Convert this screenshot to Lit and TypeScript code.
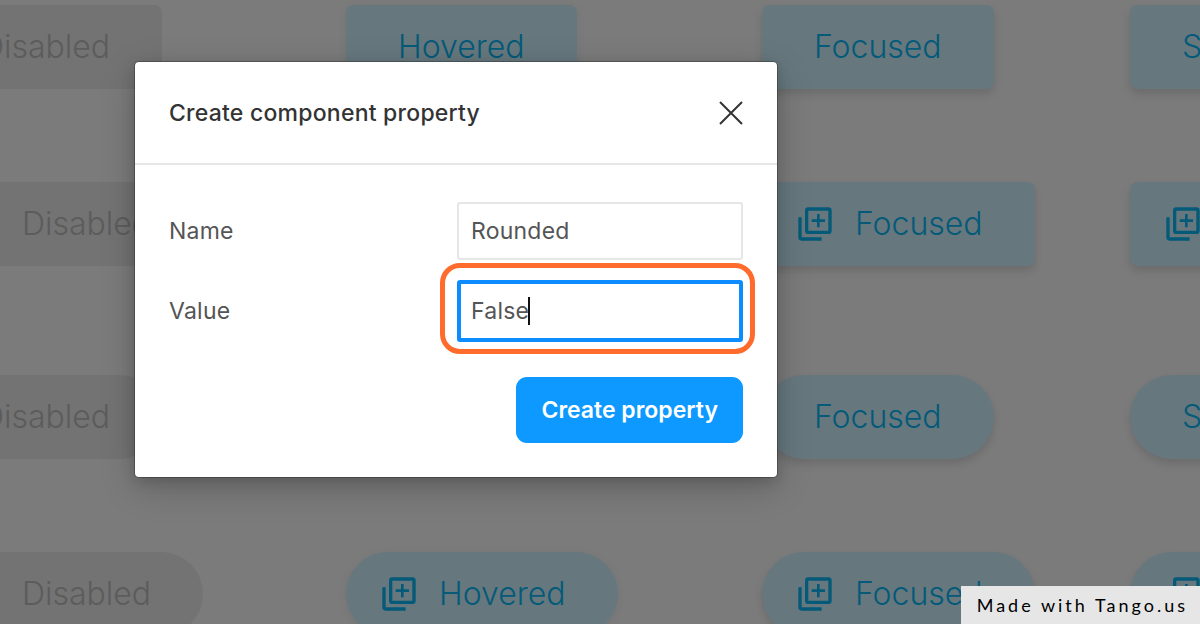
import { LitElement, html, css, svg, nothing } from "lit";
import { customElement, property, state } from "lit/decorators.js";
import { classMap } from "lit/directives/class-map.js";

type Tone = "disabled" | "hovered" | "focused" | "selected";

@customElement("state-button")
class StateButton extends LitElement {
  @property() label = "";
  @property() tone: Tone = "focused";
  @property({ type: Boolean }) icon = false;
  @property({ type: Boolean }) pill = false;

  static styles = css`
    :host {
      display: block;
    }
    .button {
      display: flex;
      align-items: center;
      gap: 20px;
      height: 84px;
      margin: 0;
      padding: 0 52px;
      border: 0;
      border-radius: 8px;
      background: #66787e;
      color: #045a78;
      font: 300 32px/40px Inter, sans-serif;
      white-space: nowrap;
    }
    .with-icon {
      padding-left: 33px;
    }
    .pill {
      border-radius: 42px;
    }
    .hovered {
      box-shadow: 0 2px 10px rgba(0, 0, 0, 0.06);
    }
    .focused,
    .selected {
      box-shadow: 0 5px 8px rgba(0, 0, 0, 0.12);
    }
    .disabled {
      background: #737373;
      color: #5c5c5c;
    }
    .glyph {
      width: 40px;
      height: 40px;
      flex: none;
      fill: currentColor;
    }
  `;

  render() {
    const classes = {
      button: true,
      "with-icon": this.icon,
      pill: this.pill,
      [this.tone]: true,
    };
    return html`<button
      type="button"
      class=${classMap(classes)}
      ?disabled=${this.tone === "disabled"}
      tabindex="-1"
    >
      ${this.icon
        ? html`<svg class="glyph" viewBox="0 0 24 24" aria-hidden="true">
            ${svg`<path d="M4 8H2v12a2 2 0 0 0 2 2h12v-2H4z"/>
            <path fill-rule="evenodd" d="M8 2h12a2 2 0 0 1 2 2v12a2 2 0 0 1-2 2H8a2 2 0 0 1-2-2V4a2 2 0 0 1 2-2zm0 2v12h12V4z"/>
            <path d="M13.200 6h1.600v3.200H18v1.600h-3.200V14h-1.600v-3.200H10V9.200h3.200z"/>`}
          </svg>`
        : nothing}
      <span>${this.label}</span>
    </button>`;
  }
}

@customElement("property-dialog")
class PropertyDialog extends LitElement {
  @state() name = "Rounded";
  @state() value = "False";

  static styles = css`
    :host {
      display: block;
    }
    .dialog {
      border-radius: 4px;
      background: #fff;
      color: #333;
      font: 400 23px/32px Inter, sans-serif;
      letter-spacing: 0.01em;
      box-shadow: 0 0 0 1px rgba(0, 0, 0, 0.25), 0 4px 14px rgba(0, 0, 0, 0.15),
        0 10px 36px rgba(0, 0, 0, 0.2);
    }
    .header {
      display: flex;
      align-items: center;
      justify-content: space-between;
      height: 101px;
      padding: 0 34px;
      border-bottom: 2px solid #e6e6e6;
    }
    .title {
      margin: 0;
      font-size: 23px;
      font-weight: 500;
      color: #333;
    }
    .close {
      display: flex;
      padding: 0;
      border: 0;
      background: none;
    }
    .cross {
      width: 24px;
      height: 24px;
      fill: none;
      stroke: #333;
      stroke-width: 2;
    }
    .form {
      display: grid;
      gap: 20px;
      padding: 37px 34px 34px;
    }
    .row {
      display: grid;
      grid-template-columns: 1fr 286px;
      align-items: center;
    }
    .label {
      color: #555;
    }
    .field {
      position: relative;
    }
    .input {
      display: block;
      box-sizing: border-box;
      width: 100%;
      height: 58px;
      padding: 0 12px;
      border: 2px solid #e6e6e6;
      border-radius: 3px;
      outline: none;
      background: #fff;
      color: #555;
      font: inherit;
      letter-spacing: inherit;
    }
    .active .input {
      height: 62px;
      padding: 0 10px;
      border: 4px solid #0d8cff;
      caret-color: transparent;
    }
    .active::after {
      content: "";
      position: absolute;
      inset: -17px -12px -12px -17px;
      border: 5px solid #ff6b2c;
      border-radius: 20px;
      pointer-events: none;
    }
    .caret {
      position: absolute;
      top: 17px;
      left: 71px;
      width: 2px;
      height: 28px;
      background: #111;
    }
    .submit {
      justify-self: end;
      margin-top: 15px;
      height: 66px;
      padding: 0 25px;
      border: 0;
      border-radius: 11px;
      background: #0d99ff;
      color: #fff;
      font: 600 23px/32px Inter, sans-serif;
    }
  `;

  private submit(event: Event) {
    event.preventDefault();
  }

  render() {
    return html`<section class="dialog" role="dialog" aria-labelledby="title">
      <header class="header">
        <h2 class="title" id="title">Create component property</h2>
        <button class="close" type="button" aria-label="Close">
          <svg class="cross" viewBox="0 0 24 24" aria-hidden="true">
            <path d="M1 1 23 23M23 1 1 23" />
          </svg>
        </button>
      </header>
      <form class="form" @submit=${this.submit}>
        <div class="row">
          <label class="label" for="name">Name</label>
          <div class="field">
            <input class="input" id="name" type="text" .value=${this.name} />
          </div>
        </div>
        <div class="row">
          <label class="label" for="value">Value</label>
          <div class="field active">
            <input class="input" id="value" type="text" .value=${this.value} />
            <span class="caret"></span>
          </div>
        </div>
        <button class="submit" type="submit">Create property</button>
      </form>
    </section>`;
  }
}

@customElement("app-root")
class AppRoot extends LitElement {
  static styles = css`
    :host {
      display: block;
      position: relative;
      height: 100vh;
      overflow: hidden;
      background: #7b7b7b;
    }
    .canvas {
      display: grid;
      gap: 109px;
      margin-left: -71px;
      padding-top: 5px;
    }
    .group {
      display: grid;
      grid-template-columns: 417px 416px 368px max-content;
      justify-items: start;
      row-gap: 93px;
    }
    .overlay {
      position: absolute;
      top: 62px;
      left: 135px;
      width: 642px;
      max-width: 100%;
    }
    .credit {
      position: absolute;
      right: 0;
      bottom: 0;
      padding: 5px 12px 5px 16px;
      background: #e6e6e6;
      color: #000;
      font: 400 18px/28px Lato, sans-serif;
      letter-spacing: 3px;
      white-space: nowrap;
    }
  `;

  private tones: [Tone, string][] = [
    ["disabled", "Disabled"],
    ["hovered", "Hovered"],
    ["focused", "Focused"],
    ["selected", "Selected"],
  ];

  render() {
    return html`
      <div class="canvas">
        ${[false, true].map(
          (pill) => html`<div class="group">
            ${[false, true].map((icon) =>
              this.tones.map(
                ([tone, label]) => html`<state-button
                  .tone=${tone}
                  .label=${label}
                  .icon=${icon}
                  .pill=${pill}
                ></state-button>`
              )
            )}
          </div>`
        )}
      </div>
      <property-dialog class="overlay"></property-dialog>
      <div class="credit">Made with Tango.us</div>
    `;
  }
}
